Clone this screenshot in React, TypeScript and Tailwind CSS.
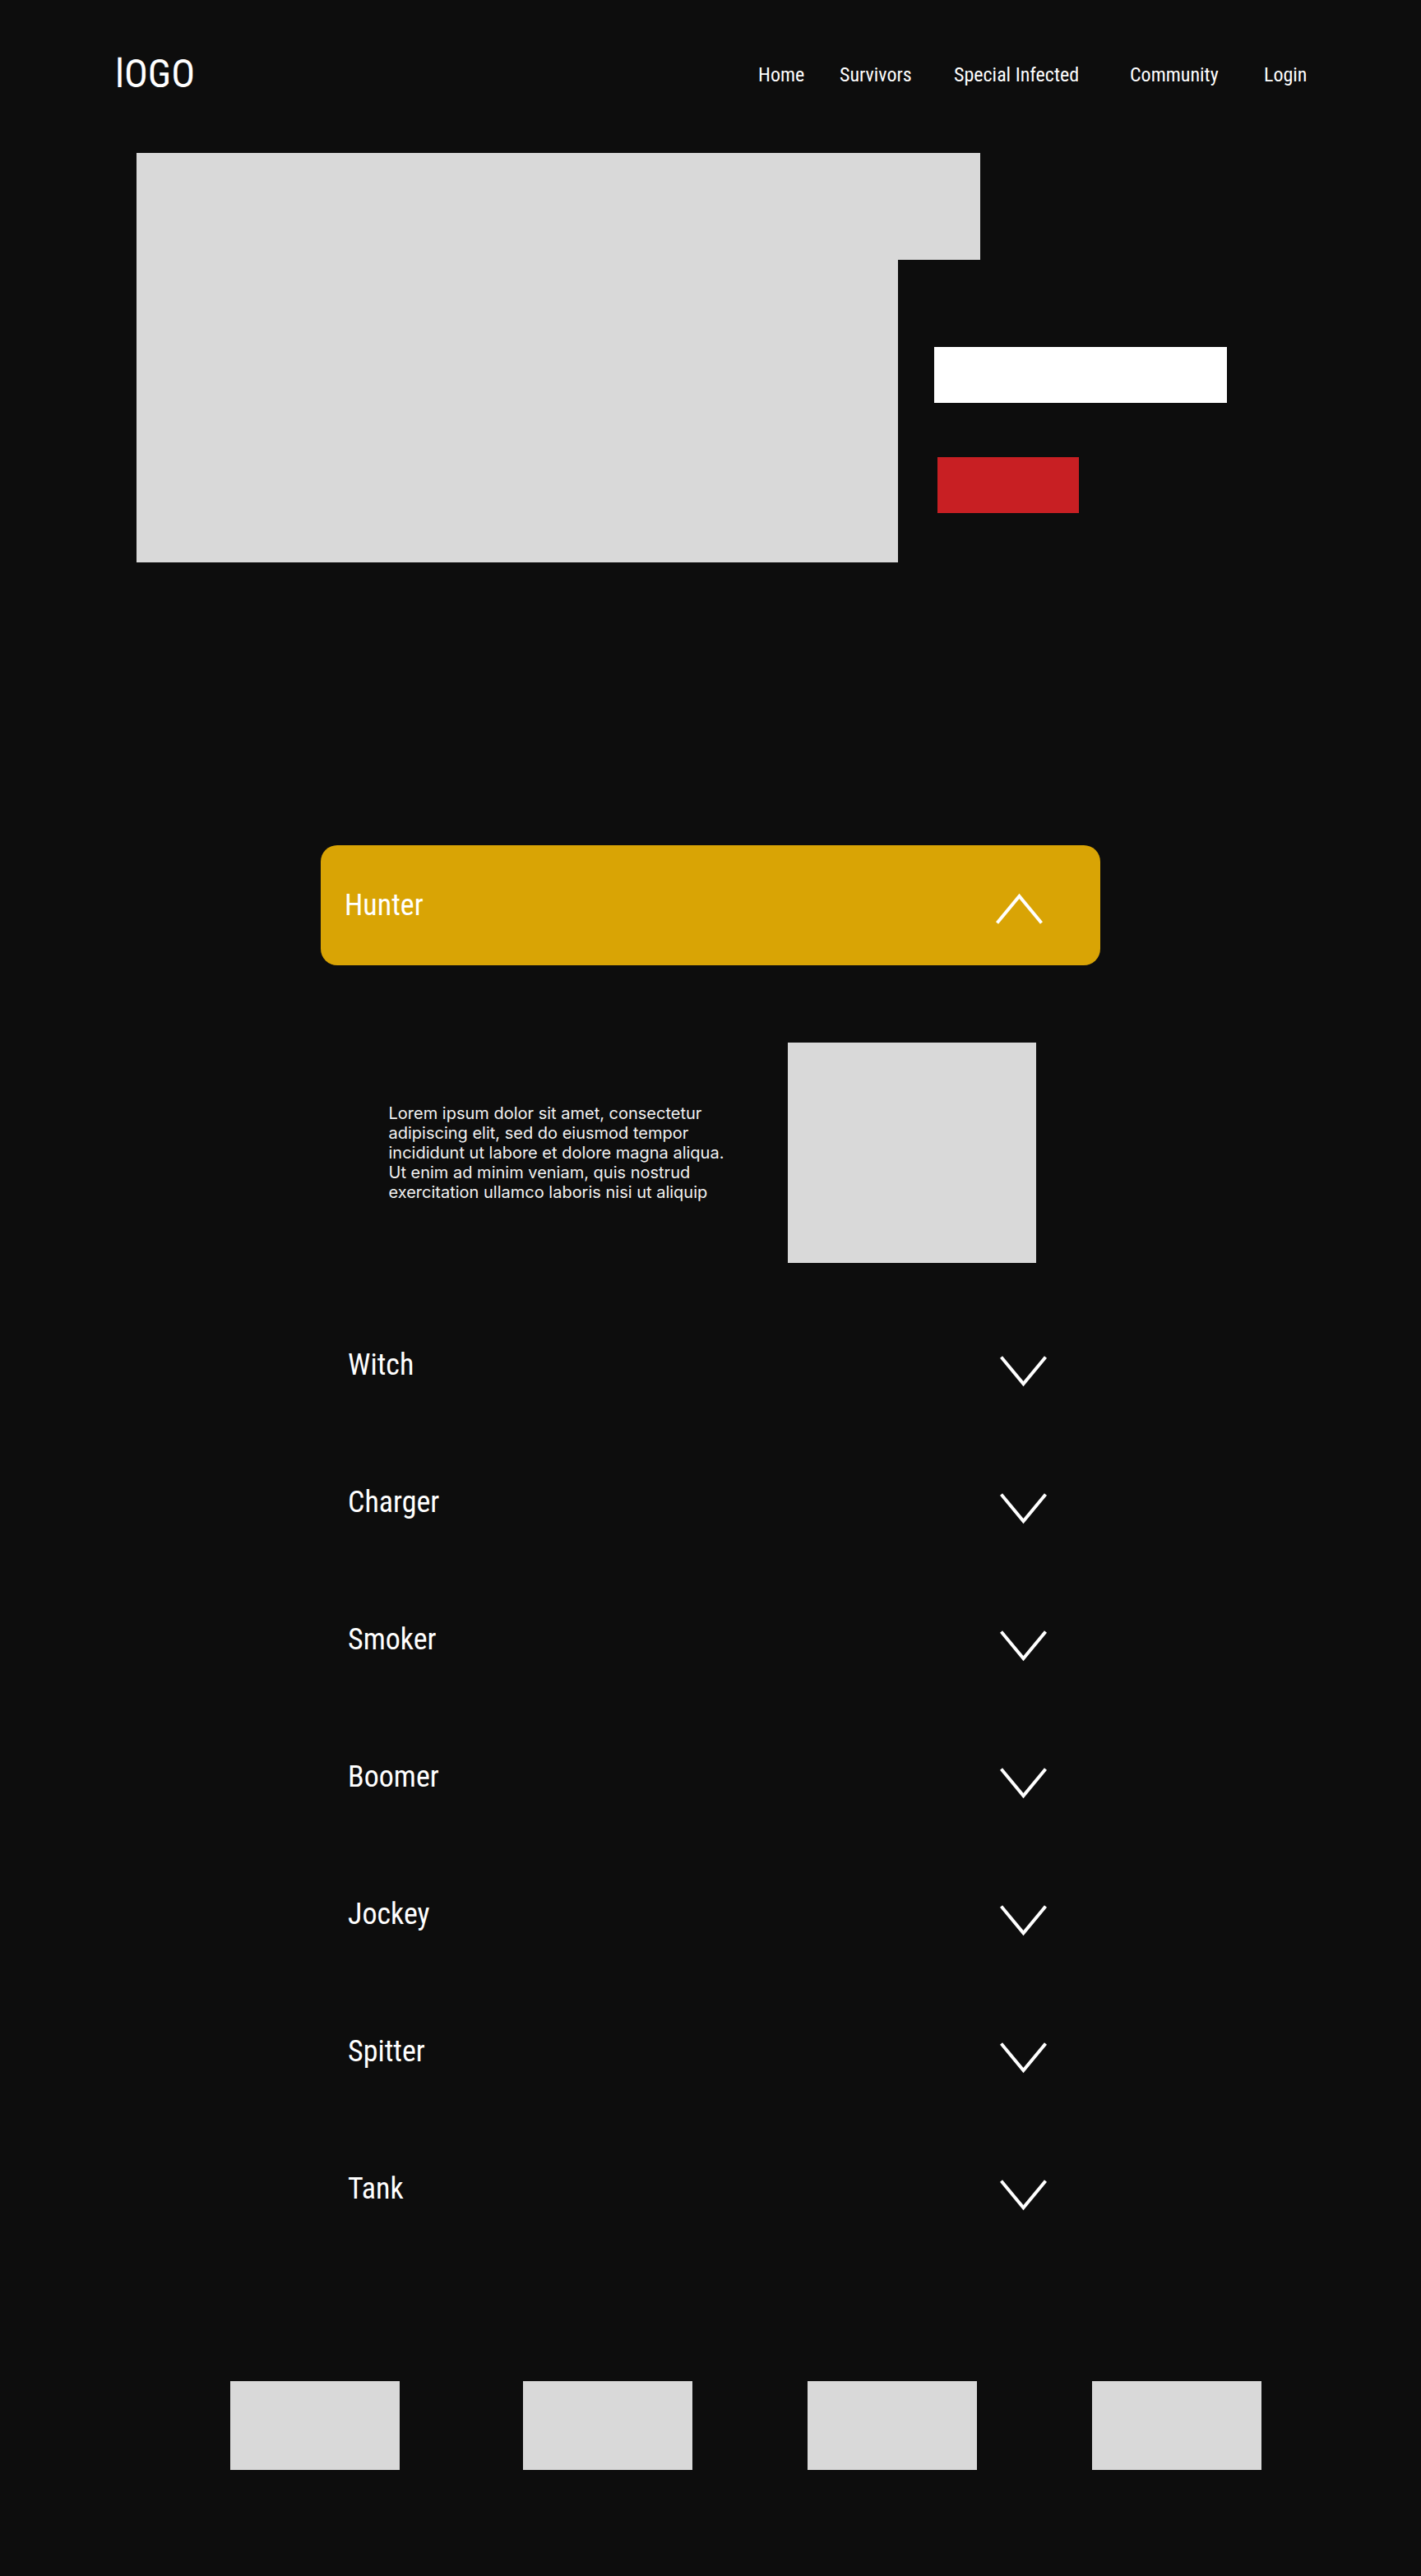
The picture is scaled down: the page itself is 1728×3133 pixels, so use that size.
import React from 'react';

const condensed = "font-['Roboto_Condensed','Liberation_Sans_Narrow','DejaVu_Sans_Condensed',Roboto,sans-serif] font-stretch-condensed";

const navItems = [
  { label: 'Home', width: 'w-[99px]' },
  { label: 'Survivors', width: 'w-[139px]' },
  { label: 'Special Infected', width: 'w-[214px]' },
  { label: 'Community', width: 'w-[163px]' },
  { label: 'Login', width: 'w-[51px]' },
];

const infected = ['Witch', 'Charger', 'Smoker', 'Boomer', 'Jockey', 'Spitter', 'Tank'];

function Chevron({ up = false }: { up?: boolean }) {
  return (
    <svg width="57" height="38" viewBox="0 0 57 38" fill="none" className="shrink-0">
      <polyline
        points={up ? '1.5,36.5 28.5,4 55.5,36.5' : '1.5,1.5 28.5,34 55.5,1.5'}
        stroke="white"
        strokeWidth="4"
        strokeLinejoin="miter"
      />
    </svg>
  );
}

export default function App() {
  return (
    <div className={`min-h-[3133px] bg-[#0d0d0d] text-white pb-[129px] ${condensed}`}>
      {/* Header */}
      <header className="flex items-start pt-[66px] pl-[140px] pr-[140px]">
        <div className="flex-1 text-[48px] leading-none">lOGO</div>
        <nav className="flex mt-[13px] text-[24px] leading-none">
          {navItems.map((item) => (
            <a key={item.label} className={`${item.width} whitespace-nowrap`}>
              {item.label}
            </a>
          ))}
        </nav>
      </header>

      {/* Hero */}
      <section className="mt-[72px] pl-[166px]">
        <div className="w-[1026px] h-[130px] bg-[#d9d9d9]" />
        <div className="flex">
          <div className="w-[926px] h-[368px] bg-[#d9d9d9]" />
          <div className="ml-[44px] pt-[106px]">
            <div className="w-[356px] h-[68px] bg-white" />
            <div className="ml-[4px] mt-[66px] w-[172px] h-[68px] bg-[#c81f23]" />
          </div>
        </div>
      </section>

      {/* Accordion */}
      <section className="mt-[344px] w-[948px] mx-auto">
        <div className="flex items-center justify-between h-[146px] rounded-[20px] bg-[#d9a405] pl-[29px] pr-[70px]">
          <span className="text-[36px] leading-none">Hunter</span>
          <div className="mt-[8px]">
            <Chevron up />
          </div>
        </div>

        <div className="mt-[94px] flex items-center w-[791px] mx-auto">
          <p className="w-[489px] pl-[4px] font-['Inter',sans-serif] text-[20px] leading-[24px] text-[#f2f2f2]">
            Lorem ipsum dolor sit amet, consectetur
            <br />
            adipiscing elit, sed do eiusmod tempor
            <br />
            incididunt ut labore et dolore magna aliqua.
            <br />
            Ut enim ad minim veniam, quis nostrud
            <br />
            exercitation ullamco laboris nisi ut aliquip
          </p>
          <div className="w-[302px] h-[268px] bg-[#d9d9d9]" />
        </div>

        <div className="mt-[106px]">
          {infected.map((name) => (
            <div key={name} className="flex items-start justify-between h-[167px] pl-[33px] pr-[65px]">
              <span className="text-[36px] leading-none">{name}</span>
              <div className="mt-[7px]">
                <Chevron />
              </div>
            </div>
          ))}
        </div>
      </section>

      {/* Footer cards */}
      <section className="mt-[85px] flex pl-[280px]">
        <div className="w-[206px] h-[108px] bg-[#d9d9d9]" />
        <div className="ml-[150px] w-[206px] h-[108px] bg-[#d9d9d9]" />
        <div className="ml-[140px] w-[206px] h-[108px] bg-[#d9d9d9]" />
        <div className="ml-[140px] w-[206px] h-[108px] bg-[#d9d9d9]" />
      </section>
    </div>
  );
}
